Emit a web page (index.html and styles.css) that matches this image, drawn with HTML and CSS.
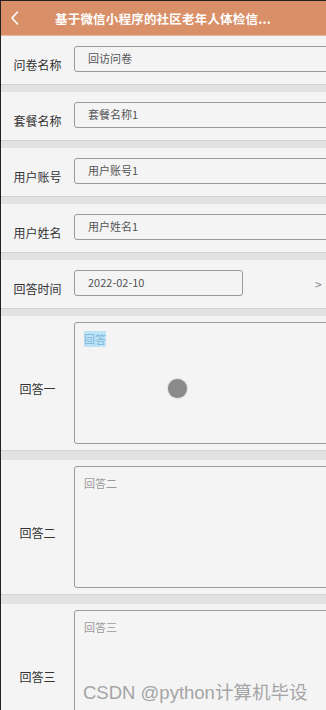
FILE: index.html
```html
<!DOCTYPE html>
<html>
<head>
  <meta charset="utf-8">
  <title>问卷回答</title>
  <link rel="stylesheet" href="styles.css">
</head>
<body>

  <header class="nav-bar">
    <span class="back-btn">
      <svg width="10" height="16" viewBox="0 0 10 16"><path d="M8 1.5 L2 8 L8 14.5" fill="none" stroke="#fff" stroke-width="1.6"/></svg>
    </span>
    <h1>基于微信小程序的社区老年人体检信...</h1>
  </header>

  <div class="form">
    <div class="row">
      <label>问卷名称</label>
      <div class="field">回访问卷</div>
    </div>
    <div class="sep"></div>

    <div class="row">
      <label>套餐名称</label>
      <div class="field">套餐名称1</div>
    </div>
    <div class="sep"></div>

    <div class="row">
      <label>用户账号</label>
      <div class="field">用户账号1</div>
    </div>
    <div class="sep"></div>

    <div class="row">
      <label>用户姓名</label>
      <div class="field">用户姓名1</div>
    </div>
    <div class="sep"></div>

    <div class="row">
      <label>回答时间</label>
      <div class="field date">2022-02-10</div>
      <span class="arrow">&gt;</span>
    </div>
    <div class="sep"></div>

    <div class="row tall">
      <label>回答一</label>
      <div class="area">
        <span class="ph selected">回答</span>
        <span class="touch"></span>
      </div>
    </div>
    <div class="sep wide"></div>

    <div class="row tall">
      <label>回答二</label>
      <div class="area"><span class="ph">回答二</span></div>
    </div>
    <div class="sep wide"></div>

    <div class="row tall">
      <label>回答三</label>
      <div class="area"><span class="ph">回答三</span></div>
    </div>
  </div>

  <div class="watermark">CSDN @python计算机毕设</div>

</body>
</html>
```

FILE: styles.css
```css
body {
  margin: 0;
  font-family: "Noto Sans CJK SC", "Noto Sans", sans-serif;
  background-color: #f4f4f5;
  color: #333;
  width: 326px;
  height: 710px;
  overflow: hidden;
  border-left: 1px solid #222;
  border-top: 1px solid #222;
  box-sizing: border-box;
  position: relative;
}

.nav-bar {
  height: 34px;
  background-color: #d99068;
  display: flex;
  align-items: center;
  border-bottom: 1px solid #e8b89c;
}

.back-btn {
  width: 54px;
  padding-left: 9px;
  box-sizing: border-box;
  display: flex;
  align-items: center;
}

.nav-bar h1 {
  margin: 0;
  font-size: 12.5px;
  font-weight: bold;
  color: white;
  white-space: nowrap;
  letter-spacing: 0.2px;
}

.row {
  display: flex;
  align-items: flex-start;
  height: 48px;
  padding-top: 10px;
  box-sizing: border-box;
  overflow: hidden;
  background: #f4f4f5;
}

.row label {
  width: 73px;
  flex-shrink: 0;
  text-align: center;
  font-size: 12px;
  line-height: 14px;
  padding-top: 12px;
  color: #333;
}

.field {
  width: 270px;
  flex-shrink: 0;
  height: 26px;
  box-sizing: border-box;
  border: 1px solid #9a9a9a;
  border-radius: 3px;
  padding-left: 13px;
  font-size: 11px;
  line-height: 22px;
  color: #555;
}

.field.date {
  width: 169px;
}

.arrow {
  margin-left: 72px;
  font-size: 12px;
  line-height: 28px;
  color: #888;
}

.row.tall {
  height: 134px;
  padding-top: 6px;
  align-items: stretch;
}

.row.tall label {
  padding-top: 0;
  align-self: center;
  margin-top: 6px;
}

.area {
  position: relative;
  width: 270px;
  height: 122px;
  flex-shrink: 0;
  box-sizing: border-box;
  border: 1px solid #9a9a9a;
  border-radius: 3px;
  padding: 9px 9px;
  font-size: 11px;
  line-height: 14px;
}

.ph {
  color: #999;
}

.ph.selected {
  background: #bfe3f6;
  color: #7ab8dc;
}

.touch {
  position: absolute;
  left: 93px;
  top: 56px;
  width: 19px;
  height: 19px;
  border-radius: 50%;
  background: #8a8a8a;
  box-shadow: 0 0 2px #aaa;
}

.sep {
  height: 7px;
  background: #e2e2e3;
  border-top: 1px solid #d3d3d3;
}

.sep.wide {
  height: 9px;
}

.watermark {
  position: absolute;
  left: 82px;
  bottom: 6px;
  font-family: "Liberation Sans", "Noto Sans CJK SC", sans-serif;
  font-size: 18.5px;
  color: #a5a5a5;
  white-space: nowrap;
}
```
